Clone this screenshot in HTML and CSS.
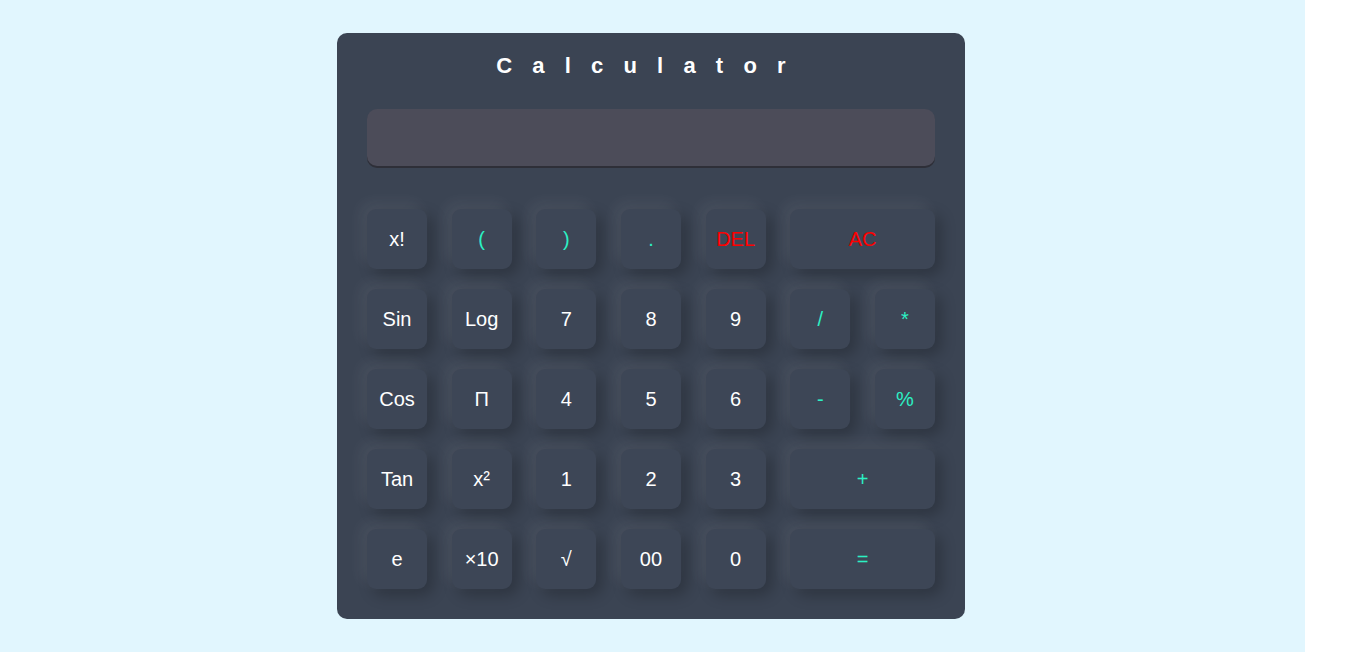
FILE: index.html
```html
<!DOCTYPE html>
<html>
<head>
<meta charset="utf-8">
<title>Calculator</title>
<link rel="stylesheet" href="styles.css">
</head>
<body>
<div class="page">
  <div class="calc">
    <h1 class="title">Calculator</h1>
    <div class="display"></div>
    <div class="keys">
      <button class="key">x!</button>
      <button class="key op">(</button>
      <button class="key op">)</button>
      <button class="key op">.</button>
      <button class="key red">DEL</button>
      <button class="key red wide">AC</button>

      <button class="key">Sin</button>
      <button class="key">Log</button>
      <button class="key">7</button>
      <button class="key">8</button>
      <button class="key">9</button>
      <button class="key op">/</button>
      <button class="key op">*</button>

      <button class="key">Cos</button>
      <button class="key">Π</button>
      <button class="key">4</button>
      <button class="key">5</button>
      <button class="key">6</button>
      <button class="key op">-</button>
      <button class="key op">%</button>

      <button class="key">Tan</button>
      <button class="key">x²</button>
      <button class="key">1</button>
      <button class="key">2</button>
      <button class="key">3</button>
      <button class="key op wide">+</button>

      <button class="key">e</button>
      <button class="key">×10</button>
      <button class="key">√</button>
      <button class="key">00</button>
      <button class="key">0</button>
      <button class="key op wide">=</button>
    </div>
  </div>
</div>
</body>
</html>
```

FILE: styles.css
```css
html, body {
  margin: 0;
  padding: 0;
  background: #ffffff;
}

.page {
  width: 1305px;
  height: 652px;
  box-sizing: border-box;
  padding-top: 33px;
  background: #e1f6fe;
  display: flex;
  align-items: flex-start;
  justify-content: center;
  font-family: "Liberation Sans", Arial, sans-serif;
}

.calc {
  width: 628px;
  height: 586px;
  box-sizing: border-box;
  background: #3b4453;
  border-radius: 10px;
  padding: 18px 30px 0;
  margin-left: -3px;
}

.title {
  margin: 0;
  text-align: center;
  color: #ffffff;
  font-size: 22px;
  font-weight: bold;
  letter-spacing: 20.2px;
  line-height: 30px;
}

.display {
  margin-top: 28px;
  height: 57px;
  background: #4c4c59;
  border-radius: 10px;
  box-shadow: 0 2px 0 #2e2f38;
}

.keys {
  margin-top: 43px;
  display: grid;
  grid-template-columns: repeat(7, 60px);
  grid-auto-rows: 60px;
  justify-content: space-between;
  row-gap: 20px;
}

.key {
  border: none;
  outline: none;
  background: #3d4656;
  border-radius: 9px;
  color: #ffffff;
  font-family: "Liberation Sans", Arial, sans-serif;
  font-size: 20px;
  padding: 0;
  box-shadow: -6px -6px 15px rgba(255, 255, 255, 0.07), 6px 6px 15px rgba(0, 0, 0, 0.24);
}

.op {
  color: #2cf0c4;
}

.red {
  color: #ff0000;
}

.wide {
  grid-column: span 2;
}
```
